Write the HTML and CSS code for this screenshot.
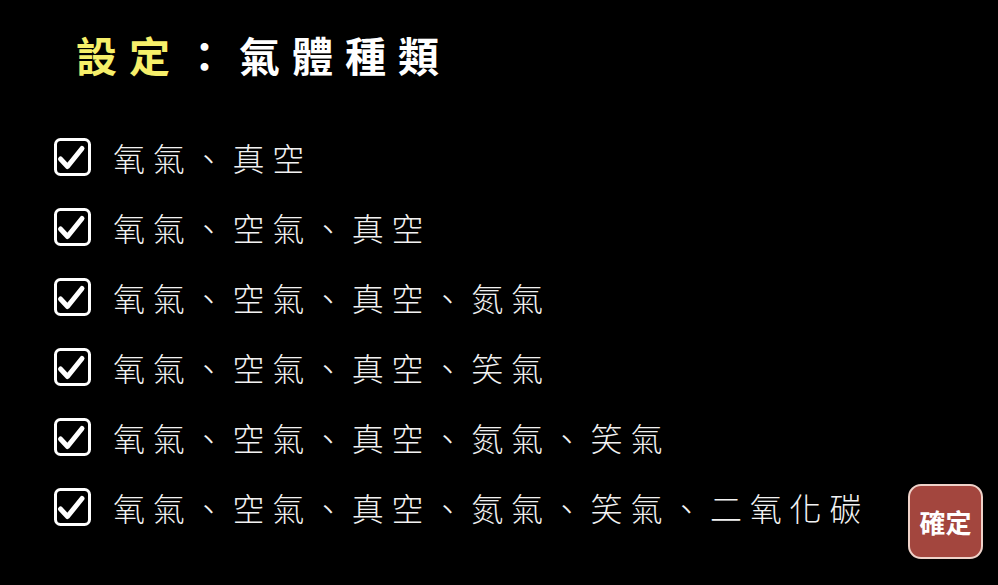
FILE: index.html
```html
<!DOCTYPE html>
<html lang="zh-Hant">
<head>
<meta charset="utf-8">
<title>設定：氣體種類</title>
<link rel="stylesheet" href="styles.css">
</head>
<body>
<div class="page">
  <h1 class="title"><span class="hl">設定</span><span class="colon">：</span>氣體種類</h1>
  <div class="main">
    <ul class="list">
      <li class="row"><svg class="cb" viewBox="0 0 40 40"><rect x="3.5" y="2.5" width="34" height="35" rx="5" /><path d="M8.5 22 L15.5 29.5 L30 11.5" /></svg><span class="label">氧氣、真空</span></li>
      <li class="row"><svg class="cb" viewBox="0 0 40 40"><rect x="3.5" y="2.5" width="34" height="35" rx="5" /><path d="M8.5 22 L15.5 29.5 L30 11.5" /></svg><span class="label">氧氣、空氣、真空</span></li>
      <li class="row"><svg class="cb" viewBox="0 0 40 40"><rect x="3.5" y="2.5" width="34" height="35" rx="5" /><path d="M8.5 22 L15.5 29.5 L30 11.5" /></svg><span class="label">氧氣、空氣、真空、氮氣</span></li>
      <li class="row"><svg class="cb" viewBox="0 0 40 40"><rect x="3.5" y="2.5" width="34" height="35" rx="5" /><path d="M8.5 22 L15.5 29.5 L30 11.5" /></svg><span class="label">氧氣、空氣、真空、笑氣</span></li>
      <li class="row"><svg class="cb" viewBox="0 0 40 40"><rect x="3.5" y="2.5" width="34" height="35" rx="5" /><path d="M8.5 22 L15.5 29.5 L30 11.5" /></svg><span class="label">氧氣、空氣、真空、氮氣、笑氣</span></li>
      <li class="row"><svg class="cb" viewBox="0 0 40 40"><rect x="3.5" y="2.5" width="34" height="35" rx="5" /><path d="M8.5 22 L15.5 29.5 L30 11.5" /></svg><span class="label">氧氣、空氣、真空、氮氣、笑氣、二氧化碳</span></li>
    </ul>
    <button class="ok">確定</button>
  </div>
</div>
</body>
</html>
```
FILE: styles.css
```css
html, body {
  margin: 0;
  padding: 0;
  background: #000;
}
.page {
  width: 998px;
  height: 585px;
  box-sizing: border-box;
  font-family: "Noto Sans CJK TC", "Noto Sans CJK SC", sans-serif;
  color: #fff;
  overflow: hidden;
}
.title {
  margin: 0;
  padding: 34px 0 0 76px;
  font-size: 41px;
  line-height: 40px;
  height: 40px;
  font-weight: 700;
  letter-spacing: 12px;
  color: #fff;
}
.hl {
  color: #f6ef6a;
}
.colon {
  margin-left: 2px;
  margin-right: 2px;
}
.main {
  display: flex;
  justify-content: space-between;
  margin-top: 48px;
  padding-right: 15px;
}
.list {
  list-style: none;
  margin: 0;
  padding: 0 0 0 52px;
}
.row {
  display: flex;
  align-items: center;
  height: 70px;
  gap: 21px;
}
.cb {
  width: 40px;
  height: 40px;
  flex: none;
}
.cb rect {
  fill: none;
  stroke: #fff;
  stroke-width: 3;
}
.cb path {
  fill: none;
  stroke: #fff;
  stroke-width: 5;
  stroke-linecap: round;
  stroke-linejoin: round;
}
.label {
  font-size: 32px;
  line-height: 40px;
  font-weight: 300;
  letter-spacing: 7.8px;
  color: #f2f2f2;
}
.ok {
  align-self: flex-end;
  margin-bottom: -17px;
  width: 75px;
  height: 75px;
  box-sizing: border-box;
  background: #a3463e;
  border: 2px solid #efd2c9;
  border-radius: 13px;
  color: #fff;
  font-family: "Noto Sans CJK TC", "Noto Sans CJK SC", sans-serif;
  font-size: 26px;
  font-weight: 700;
  padding: 0;
  line-height: 1;
}
```
